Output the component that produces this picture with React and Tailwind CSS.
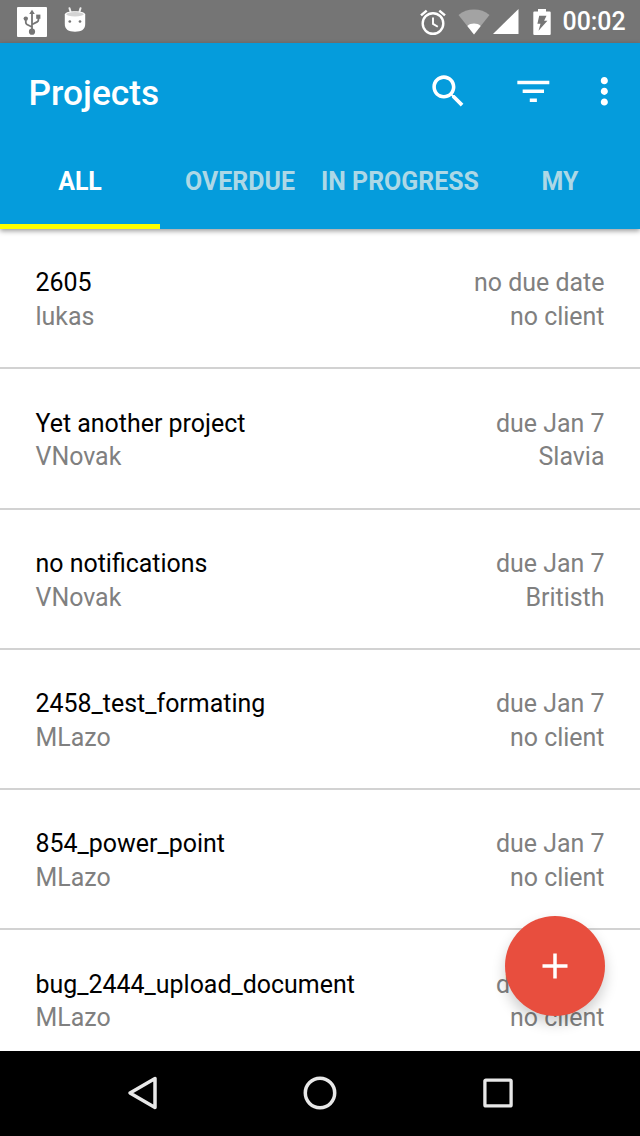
const projects = [
  { name: '2605', owner: 'lukas', due: 'no due date', client: 'no client' },
  { name: 'Yet another project', owner: 'VNovak', due: 'due Jan 7', client: 'Slavia' },
  { name: 'no notifications', owner: 'VNovak', due: 'due Jan 7', client: 'Britisth' },
  { name: '2458_test_formating', owner: 'MLazo', due: 'due Jan 7', client: 'no client' },
  { name: '854_power_point', owner: 'MLazo', due: 'due Jan 7', client: 'no client' },
  { name: 'bug_2444_upload_document', owner: 'MLazo', due: 'due Jan 7', client: 'no client' },
];

const tabs = ['ALL', 'OVERDUE', 'IN PROGRESS', 'MY'];

function UsbIcon() {
  return (
    <svg className="h-[30px] w-[30px] shrink-0" viewBox="0 0 30 30">
      <rect width="30" height="30" rx="1" fill="#fff" />
      <g fill="none" stroke="#757575" strokeWidth="1.8">
        <path d="M15 6v18M15 20l-5-2.500q-1.200-.7-1.200-1.900V12M15 17.500l5.200-2.600q1.200-.6 1.200-1.800V10" />
      </g>
      <path d="M15 2.800l2.800 4.200h-5.600z" fill="#757575" />
      <circle cx="15" cy="24.700" r="3.100" fill="#757575" />
      <circle cx="8.800" cy="11.600" r="2.200" fill="#757575" />
      <rect x="19.200" y="7.600" width="4.200" height="4.200" fill="#757575" />
    </svg>
  );
}

function DroidIcon() {
  return (
    <svg className="h-[26px] w-[22px] shrink-0" viewBox="0 0 22 26">
      <path d="M5.500 1.200l1.500 5M16.500 1.200l-1.500 5" stroke="#eee" strokeWidth="2" strokeLinecap="round" />
      <path d="M.8 7.500C1.200 5.300 5.500 4.300 11 4.300s9.800 1 10.200 3.200V17c0 5.500-3.700 7.700-10.200 7.700S.8 22.500.8 17z" fill="#fff" />
      <ellipse cx="11" cy="7.200" rx="8.800" ry="2.200" fill="#d4d4d4" />
      <circle cx="5.800" cy="14.500" r="1.350" fill="#757575" />
      <circle cx="16" cy="14.500" r="1.350" fill="#757575" />
    </svg>
  );
}

function AlarmIcon() {
  return (
    <svg className="h-[26px] w-[26px] shrink-0" viewBox="0 0 26 26" fill="none" stroke="#fff">
      <circle cx="13" cy="14.500" r="10.300" strokeWidth="2.400" />
      <path d="M13 8.500v6.400l4.800 2.900" strokeWidth="1.900" />
      <path d="M1 6.400l5.700-4.800M25 6.400l-5.700-4.800" strokeWidth="2.500" />
    </svg>
  );
}

function WifiIcon() {
  return (
    <svg className="h-[26px] w-[32px] shrink-0" viewBox="0 0 32 26">
      <path d="M16 25.500L.5 6C5 2.300 10 .5 16 .5S27 2.300 31.500 6z" fill="#a3a3a3" />
      <path d="M16 25.500L9.300 17c1.900-1.600 4.100-2.400 6.700-2.400s4.800.8 6.700 2.400z" fill="#fff" />
    </svg>
  );
}

function SignalIcon() {
  return (
    <svg className="h-[25px] w-[26px] shrink-0" viewBox="0 0 26 25">
      <path d="M0 25L25.500 0v25z" fill="#fff" />
    </svg>
  );
}

function BatteryIcon() {
  return (
    <svg className="h-[26px] w-[18px] shrink-0" viewBox="0 0 18 26">
      <path d="M5 0h8v2.500h3.700q1 0 1 1V25q0 1-1 1H1.300q-1 0-1-1V3.500q0-1 1-1H5z" fill="#fff" />
      <path d="M6.200 6.800h7.300l-2.400 5h3.300L5.500 21.800l2-7H4.400z" fill="#757575" />
    </svg>
  );
}

function ActionIcon({ d, className }) {
  return (
    <svg className={`h-[42.67px] w-[42.67px] shrink-0 ${className}`} viewBox="0 0 24 24" fill="#fff">
      <path d={d} />
    </svg>
  );
}

function StatusBar() {
  return (
    <div className="flex h-[43px] shrink-0 items-center bg-[#757575] pr-[14.5px] pl-[17px] text-white">
      <UsbIcon />
      <div className="ml-[17px] -mt-[3px]">
        <DroidIcon />
      </div>
      <div className="ml-auto flex items-center">
        <AlarmIcon />
        <div className="ml-[11.5px]"><WifiIcon /></div>
        <div className="ml-[3px]"><SignalIcon /></div>
        <div className="ml-[14px]"><BatteryIcon /></div>
        <span className="ml-[12px] w-[63px] pt-px text-[24.9px] leading-[30px] font-medium whitespace-nowrap">00:02</span>
      </div>
    </div>
  );
}

function Row({ project }) {
  return (
    <li className="flex h-[140.25px] shrink-0 flex-col text-[24.95px] leading-[33.7px] text-[#808080]">
      <div className="flex flex-1 justify-between pt-[37.45px] pr-[35.5px] pl-[35.5px]">
        <div>
          <p className="text-black">{project.name}</p>
          <p>{project.owner}</p>
        </div>
        <div className="text-right">
          <p>{project.due}</p>
          <p>{project.client}</p>
        </div>
      </div>
      <div className="h-[2px] shrink-0 bg-[#d2d2d2]" />
    </li>
  );
}

export default function App() {
  return (
    <div className="relative flex h-[1136px] w-[640px] flex-col overflow-hidden bg-white font-[Roboto,sans-serif]">
      <StatusBar />
      <header className="z-10 flex h-[186px] shrink-0 flex-col bg-[#059cdc] shadow-[0_2px_5px_rgba(0,0,0,0.4)]">
        <div className="flex h-[97px] items-center pr-[14.3px] pl-[28.5px]">
          <h1 className="mt-[3px] text-[35.3px] leading-[42px] font-medium text-white">Projects</h1>
          <ActionIcon
            className="ml-auto"
            d="M15.500 14h-.79l-.28-.27C15.410 12.590 16 11.110 16 9.500 16 5.910 13.090 3 9.500 3S3 5.910 3 9.500 5.910 16 9.500 16c1.610 0 3.090-.59 4.230-1.570l.27.28v.79l5 4.990L20.490 19l-4.990-5zm-6 0C7.010 14 5 11.990 5 9.500S7.010 5 9.500 5 14 7.010 14 9.500 11.990 14 9.500 14z"
          />
          <ActionIcon className="ml-[42.67px]" d="M10 18h4v-2h-4v2zM3 6v2h18V6H3zm3 7h12v-2H6v2z" />
          <ActionIcon
            className="ml-[28.5px]"
            d="M12 8c1.100 0 2-.9 2-2s-.9-2-2-2-2 .9-2 2 .9 2 2 2zm0 2c-1.100 0-2 .9-2 2s.9 2 2 2 2-.9 2-2-.9-2-2-2zm0 6c-1.100 0-2 .9-2 2s.9 2 2 2 2-.9 2-2-.9-2-2-2z"
          />
        </div>
        <nav className="grid flex-1 grid-cols-4 text-[24.93px] font-bold whitespace-nowrap">
          {tabs.map((tab, i) => (
            <div
              key={tab}
              className={
                i === 0
                  ? 'flex items-center justify-center border-b-[5px] border-[#ffff00] text-white'
                  : 'flex items-center justify-center border-b-[5px] border-transparent text-[#add8e6]'
              }
            >
              {tab}
            </div>
          ))}
        </nav>
      </header>
      <ul className="flex min-h-0 flex-1 flex-col overflow-hidden">
        {projects.map((project) => (
          <Row key={project.name} project={project} />
        ))}
      </ul>
      <footer className="flex h-[85px] shrink-0 items-center bg-black pb-[0.5px]">
        <svg className="ml-[127px] h-[34px] w-[31px]" viewBox="0 0 31 34" fill="none" stroke="#e8e8e8" strokeWidth="3.500" strokeLinejoin="round">
          <path d="M28 2.500v29L3 17z" />
        </svg>
        <svg className="ml-[145px] h-[34px] w-[34px]" viewBox="0 0 34 34" fill="none" stroke="#e8e8e8" strokeWidth="3.500">
          <circle cx="17" cy="17" r="14.700" />
        </svg>
        <svg className="ml-[145.5px] h-[30px] w-[30px]" viewBox="0 0 30 30" fill="none" stroke="#e8e8e8" strokeWidth="3.300">
          <rect x="1.900" y="2.100" width="26.200" height="25.800" rx="1" />
        </svg>
      </footer>
      <button
        aria-label="Add project"
        className="absolute top-[916px] left-[505px] z-20 flex h-[99.5px] w-[99.5px] items-center justify-center rounded-full bg-[#e84e3e] shadow-[0_7px_14px_rgba(0,0,0,0.2)]"
      >
        <svg className="h-[26px] w-[26px]" viewBox="0 0 26 26" stroke="#fff" strokeWidth="3.500">
          <path d="M13 .5v25M.5 13h25" />
        </svg>
      </button>
    </div>
  );
}
